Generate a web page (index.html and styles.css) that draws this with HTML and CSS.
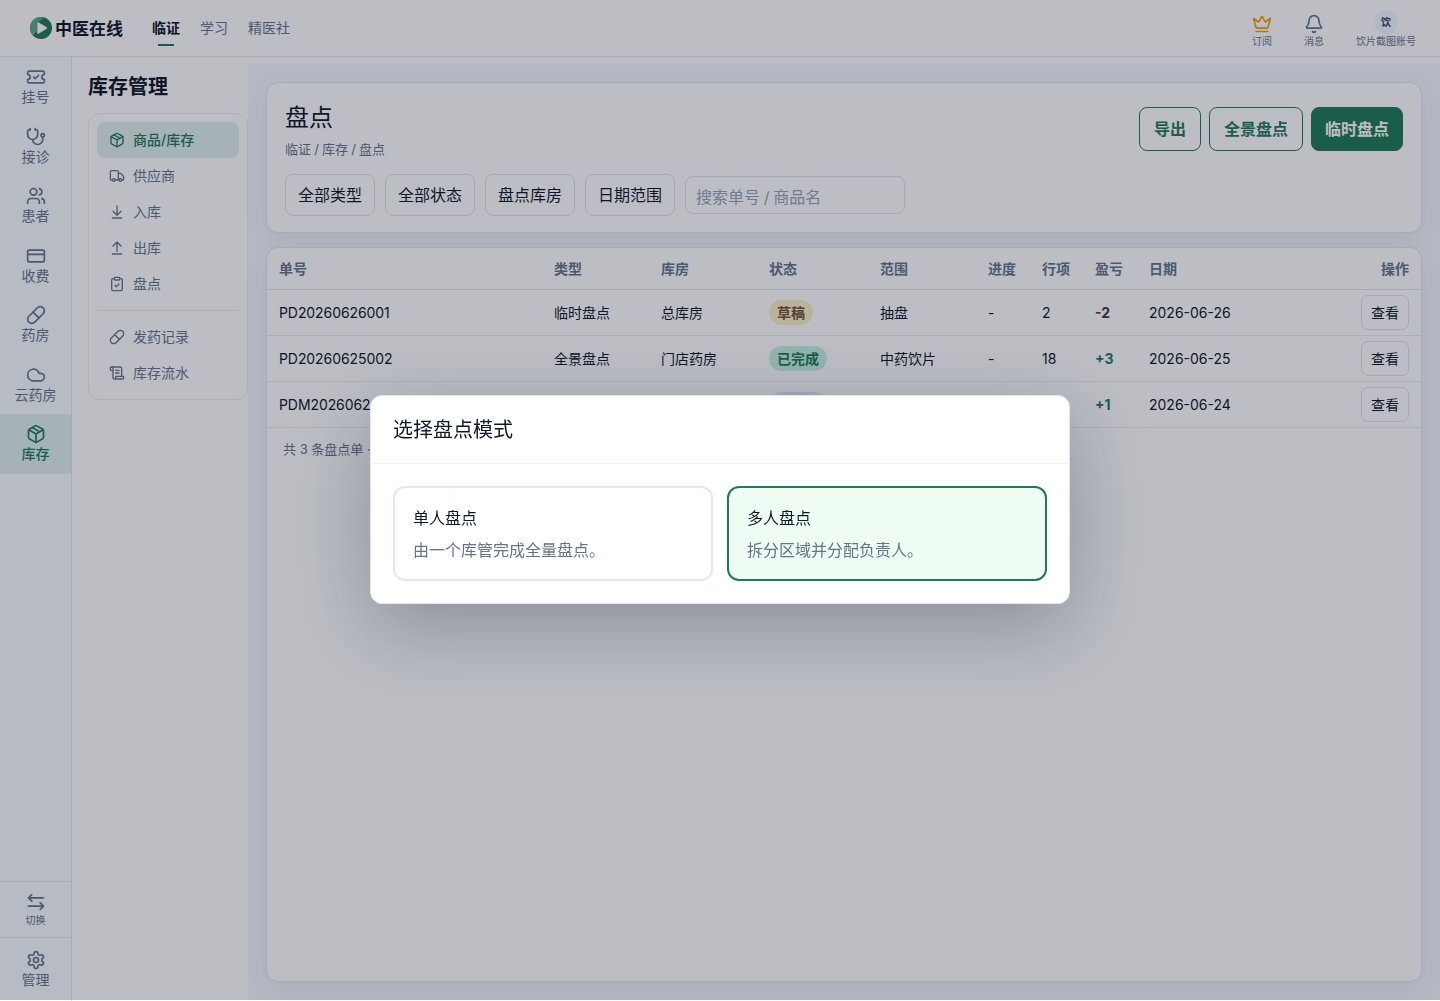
FILE: index.html
```html
<!DOCTYPE html>
<html lang="zh-CN">
<head>
    <meta charset="UTF-8">
    <meta name="viewport" content="width=device-width, initial-scale=1.0">
    <title>盘点 - 中医在线</title>
    <link rel="stylesheet" href="styles.css">
</head>
<body>
    <!-- 图标 -->
    <svg class="sprite" width="0" height="0">
        <symbol id="i-ticket" viewBox="0 0 24 24"><path d="M2 9a3 3 0 1 1 0 6v2a2 2 0 0 0 2 2h16a2 2 0 0 0 2-2v-2a3 3 0 1 1 0-6V7a2 2 0 0 0-2-2H4a2 2 0 0 0-2 2Z"/><path d="m9 12 2 2 4-4"/></symbol>
        <symbol id="i-steth" viewBox="0 0 24 24"><path d="M11 2v2M5 2v2M5 3H4a2 2 0 0 0-2 2v4a6 6 0 0 0 12 0V5a2 2 0 0 0-2-2h-1"/><path d="M8 15a6 6 0 0 0 12 0v-3"/><circle cx="20" cy="10" r="2"/></symbol>
        <symbol id="i-users" viewBox="0 0 24 24"><path d="M16 21v-2a4 4 0 0 0-4-4H6a4 4 0 0 0-4 4v2"/><circle cx="9" cy="7" r="4"/><path d="M22 21v-2a4 4 0 0 0-3-3.87M16 3.13a4 4 0 0 1 0 7.75"/></symbol>
        <symbol id="i-card" viewBox="0 0 24 24"><rect x="2" y="5" width="20" height="14" rx="2"/><path d="M2 10h20"/></symbol>
        <symbol id="i-pill" viewBox="0 0 24 24"><path d="m10.5 20.5 10-10a4.95 4.95 0 1 0-7-7l-10 10a4.95 4.95 0 1 0 7 7Z"/><path d="m8.5 8.5 7 7"/></symbol>
        <symbol id="i-cloud" viewBox="0 0 24 24"><path d="M17.5 19H9a7 7 0 1 1 6.71-9h1.79a4.5 4.5 0 1 1 0 9Z"/></symbol>
        <symbol id="i-box" viewBox="0 0 24 24"><path d="M11 21.73a2 2 0 0 0 2 0l7-4A2 2 0 0 0 21 16V8a2 2 0 0 0-1-1.73l-7-4a2 2 0 0 0-2 0l-7 4A2 2 0 0 0 3 8v8a2 2 0 0 0 1 1.73z"/><path d="M12 22V12M3.29 7 12 12l8.71-5M7.5 4.27l9 5.15"/></symbol>
        <symbol id="i-swap" viewBox="0 0 24 24"><path d="M7 3 3 7l4 4M3 7h18M17 13l4 4-4 4M21 17H3"/></symbol>
        <symbol id="i-gear" viewBox="0 0 24 24"><path d="M12.22 2h-.44a2 2 0 0 0-2 2v.18a2 2 0 0 1-1 1.73l-.43.25a2 2 0 0 1-2 0l-.15-.08a2 2 0 0 0-2.73.73l-.22.38a2 2 0 0 0 .73 2.73l.15.1a2 2 0 0 1 1 1.72v.51a2 2 0 0 1-1 1.74l-.15.09a2 2 0 0 0-.73 2.73l.22.38a2 2 0 0 0 2.73.73l.15-.08a2 2 0 0 1 2 0l.43.25a2 2 0 0 1 1 1.73V20a2 2 0 0 0 2 2h.44a2 2 0 0 0 2-2v-.18a2 2 0 0 1 1-1.73l.43-.25a2 2 0 0 1 2 0l.15.08a2 2 0 0 0 2.73-.73l.22-.39a2 2 0 0 0-.73-2.73l-.15-.08a2 2 0 0 1-1-1.74v-.5a2 2 0 0 1 1-1.74l.15-.09a2 2 0 0 0 .73-2.73l-.22-.38a2 2 0 0 0-2.73-.73l-.15.08a2 2 0 0 1-2 0l-.43-.25a2 2 0 0 1-1-1.73V4a2 2 0 0 0-2-2z"/><circle cx="12" cy="12" r="3"/></symbol>
        <symbol id="i-truck" viewBox="0 0 24 24"><path d="M14 18V6a2 2 0 0 0-2-2H4a2 2 0 0 0-2 2v11a1 1 0 0 0 1 1h2M15 18H9M19 18h2a1 1 0 0 0 1-1v-3.65a1 1 0 0 0-.22-.624l-3.48-4.35A1 1 0 0 0 17.52 8H14"/><circle cx="17" cy="18" r="2"/><circle cx="7" cy="18" r="2"/></symbol>
        <symbol id="i-in" viewBox="0 0 24 24"><path d="M12 17V3M6 11l6 6 6-6M19 21H5"/></symbol>
        <symbol id="i-out" viewBox="0 0 24 24"><path d="m18 9-6-6-6 6M12 3v14M5 21h14"/></symbol>
        <symbol id="i-clip" viewBox="0 0 24 24"><rect x="8" y="2" width="8" height="4" rx="1"/><path d="M16 4h2a2 2 0 0 1 2 2v14a2 2 0 0 1-2 2H6a2 2 0 0 1-2-2V6a2 2 0 0 1 2-2h2M9 14l2 2 4-4"/></symbol>
        <symbol id="i-scroll" viewBox="0 0 24 24"><path d="M15 12h-5M15 8h-5M19 17V5a2 2 0 0 0-2-2H4"/><path d="M8 21h12a2 2 0 0 0 2-2v-1a1 1 0 0 0-1-1H11a1 1 0 0 0-1 1v1a2 2 0 1 1-4 0V5a2 2 0 1 0-4 0v2a1 1 0 0 0 1 1h3"/></symbol>
        <symbol id="i-crown" viewBox="0 0 24 24"><path d="M11.562 3.266a.5.5 0 0 1 .876 0L15.39 8.87a1 1 0 0 0 1.516.294L21.183 5.5a.5.5 0 0 1 .798.519l-2.834 10.246a1 1 0 0 1-.956.734H5.81a1 1 0 0 1-.957-.734L2.02 6.02a.5.5 0 0 1 .798-.519l4.276 3.664a1 1 0 0 0 1.516-.294zM5 21h14"/></symbol>
        <symbol id="i-bell" viewBox="0 0 24 24"><path d="M10.268 21a2 2 0 0 0 3.464 0M3.262 15.326A1 1 0 0 0 4 17h16a1 1 0 0 0 .74-1.673C19.41 13.956 18 12.499 18 8A6 6 0 0 0 6 8c0 4.499-1.411 5.956-2.738 7.326"/></symbol>
    </svg>

    <header class="topbar">
        <div class="brand">
            <svg class="brand-logo" viewBox="0 0 22 22">
                <circle cx="11" cy="11" r="11" fill="#1f7a57"/>
                <path d="M11 0A11 11 0 0 0 3 18.5L7 14V6l7-5.5Q12.500 0 11 0Z" fill="#63a583"/>
                <path d="M7.300 5.800v10.400q0 1.100 1 .6l8.400-5q.9-.8 0-1.500l-8.400-5q-1-.5-1 .5Z" fill="#fff"/>
            </svg>
            <span>中医在线</span>
        </div>
        <nav class="topnav">
            <a class="active">临证</a>
            <a>学习</a>
            <a>精医社</a>
        </nav>
        <div class="top-actions">
            <div class="top-action"><svg class="icon crown"><use href="#i-crown"/></svg><span>订阅</span></div>
            <div class="top-action"><svg class="icon"><use href="#i-bell"/></svg><span>消息</span></div>
            <div class="top-action user"><b class="avatar">饮</b><span>饮片截图账号</span></div>
        </div>
    </header>

    <div class="layout">
        <aside class="rail">
            <a class="rail-item"><svg class="icon"><use href="#i-ticket"/></svg>挂号</a>
            <a class="rail-item"><svg class="icon"><use href="#i-steth"/></svg>接诊</a>
            <a class="rail-item"><svg class="icon"><use href="#i-users"/></svg>患者</a>
            <a class="rail-item"><svg class="icon"><use href="#i-card"/></svg>收费</a>
            <a class="rail-item"><svg class="icon"><use href="#i-pill"/></svg>药房</a>
            <a class="rail-item"><svg class="icon"><use href="#i-cloud"/></svg>云药房</a>
            <a class="rail-item active"><svg class="icon"><use href="#i-box"/></svg>库存</a>
            <div class="rail-bottom">
                <a class="rail-switch"><svg class="icon"><use href="#i-swap"/></svg>切换</a>
                <a class="rail-manage"><svg class="icon"><use href="#i-gear"/></svg>管理</a>
            </div>
        </aside>

        <aside class="side">
            <h2>库存管理</h2>
            <nav class="side-menu">
                <a class="active"><svg class="icon"><use href="#i-box"/></svg>商品/库存</a>
                <a><svg class="icon"><use href="#i-truck"/></svg>供应商</a>
                <a><svg class="icon"><use href="#i-in"/></svg>入库</a>
                <a><svg class="icon"><use href="#i-out"/></svg>出库</a>
                <a><svg class="icon"><use href="#i-clip"/></svg>盘点</a>
                <hr>
                <a><svg class="icon"><use href="#i-pill"/></svg>发药记录</a>
                <a><svg class="icon"><use href="#i-scroll"/></svg>库存流水</a>
            </nav>
        </aside>

        <main class="main">
            <section class="card head-card">
                <div class="head-row">
                    <div>
                        <h1>盘点</h1>
                        <div class="crumbs">临证 / 库存 / 盘点</div>
                    </div>
                    <div class="head-buttons">
                        <button class="btn">导出</button>
                        <button class="btn">全景盘点</button>
                        <button class="btn primary">临时盘点</button>
                    </div>
                </div>
                <div class="filters">
                    <button class="filter">全部类型</button>
                    <button class="filter">全部状态</button>
                    <button class="filter">盘点库房</button>
                    <button class="filter">日期范围</button>
                    <input class="search" type="text" placeholder="搜索单号 / 商品名">
                </div>
            </section>

            <section class="card list-card">
                <table>
                    <colgroup>
                        <col class="c-no"><col class="c-type"><col class="c-store"><col class="c-status"><col class="c-range">
                        <col class="c-progress"><col class="c-lines"><col class="c-diff"><col class="c-date"><col>
                    </colgroup>
                    <thead>
                        <tr><th>单号</th><th>类型</th><th>库房</th><th>状态</th><th>范围</th><th>进度</th><th>行项</th><th>盈亏</th><th>日期</th><th class="right">操作</th></tr>
                    </thead>
                    <tbody>
                        <tr><td>PD20260626001</td><td>临时盘点</td><td>总库房</td><td><span class="tag draft">草稿</span></td><td>抽盘</td><td>-</td><td>2</td><td class="loss">-2</td><td>2026-06-26</td><td class="right"><button class="view">查看</button></td></tr>
                        <tr><td>PD20260625002</td><td>全景盘点</td><td>门店药房</td><td><span class="tag done">已完成</span></td><td>中药饮片</td><td>-</td><td>18</td><td class="gain">+3</td><td>2026-06-25</td><td class="right"><button class="view">查看</button></td></tr>
                        <tr><td>PDM20260624</td><td></td><td></td><td><span class="tag muted">盘点中</span></td><td></td><td></td><td></td><td class="gain">+1</td><td>2026-06-24</td><td class="right"><button class="view">查看</button></td></tr>
                    </tbody>
                </table>
                <div class="summary">共 3 条盘点单 ·</div>
            </section>
        </main>
    </div>

    <div class="overlay">
        <div class="modal">
            <div class="modal-title">选择盘点模式</div>
            <div class="modal-body">
                <div class="mode">
                    <div class="mode-name">单人盘点</div>
                    <div class="mode-desc">由一个库管完成全量盘点。</div>
                </div>
                <div class="mode selected">
                    <div class="mode-name">多人盘点</div>
                    <div class="mode-desc">拆分区域并分配负责人。</div>
                </div>
            </div>
        </div>
    </div>
</body>
</html>
```

FILE: styles.css
```css
* {
    box-sizing: border-box;
}
body {
    margin: 0;
    background: #fff;
    color: #0f172a;
    font-family: Inter, "Noto Sans CJK SC", sans-serif;
    font-size: 14px;
    overflow: hidden;
}
button, input {
    font-family: inherit;
    color: inherit;
    background: none;
}
.sprite {
    position: absolute;
}
.icon {
    display: block;
    width: 20px;
    height: 20px;
    fill: none;
    stroke: currentColor;
    stroke-width: 2;
    stroke-linecap: round;
    stroke-linejoin: round;
}

/* 顶栏 */
.topbar {
    display: flex;
    align-items: center;
    height: 57px;
    padding: 0 24px 0 30px;
    border-bottom: 1px solid #e2e6ea;
}
.brand {
    display: flex;
    align-items: center;
    gap: 3px;
    width: 122px;
    font-size: 17px;
    line-height: 24px;
    font-weight: 600;
    white-space: nowrap;
}
.brand span {
    padding-top: 1px;
}
.brand-logo {
    width: 22px;
    height: 22px;
}
.topnav {
    display: flex;
    gap: 20px;
    height: 36px;
    color: #64748b;
    line-height: 36px;
}
.topnav .active {
    color: #0f172a;
    font-weight: 600;
    background: linear-gradient(#1f7a57, #1f7a57) center bottom / 16px 2px no-repeat;
}
.top-actions {
    display: flex;
    gap: 32px;
    margin-left: auto;
    padding-top: 2px;
    color: #64748b;
}
.top-action {
    display: flex;
    flex-direction: column;
    align-items: center;
    padding-top: 4px;
    font-size: 10px;
    line-height: 14px;
}
.top-action.user {
    padding-top: 0;
}
.crown {
    color: #f59e0b;
}
.avatar {
    width: 24px;
    height: 24px;
    border-radius: 50%;
    background: #f1f5ff;
    color: #334155;
    line-height: 24px;
    text-align: center;
}

/* 左侧导航 */
.layout {
    display: flex;
    height: 944px;
}
.rail {
    display: flex;
    flex-direction: column;
    width: 72px;
    background: linear-gradient(#f8fbff, #f8fbff) 0 0 / 100% 943px no-repeat;
    border-right: 1px solid #dfe3e8;
    color: #64748b;
}
.rail-item, .rail-switch, .rail-manage {
    display: flex;
    flex-direction: column;
    align-items: center;
    line-height: 20px;
}
.rail-item {
    height: 59.5px;
    padding-top: 10px;
}
.rail-item.active {
    height: 60px;
    background: #e0f0ed;
    color: #1f7a57;
    font-weight: 500;
}
.rail-bottom {
    margin-top: auto;
}
.rail-switch {
    height: 56px;
    padding-top: 10px;
    border-top: 1px solid #dfe3e8;
    font-size: 10px;
    line-height: 17px;
}
.rail-manage {
    height: 64px;
    padding-top: 12px;
    border-top: 1px solid #dfe3e8;
}

/* 库存菜单 */
.side {
    width: 176px;
    padding: 15px 0 0 16px;
}
.side h2 {
    margin: 0 0 11px;
    font-size: 20px;
    line-height: 30px;
    font-weight: 600;
}
.side-menu {
    padding: 8px;
    border: 1px solid #e9edf2;
    border-radius: 12px;
}
.side-menu a {
    display: flex;
    align-items: center;
    gap: 8px;
    height: 36px;
    padding-left: 12px;
    border-radius: 8px;
    color: #64748b;
    line-height: 20px;
}
.side-menu .active {
    background: #e0f0ed;
    color: #1f7a57;
    font-weight: 500;
}
.side-menu .icon {
    width: 16px;
    height: 16px;
}
.side-menu hr {
    height: 1px;
    margin: 8px 0;
    border: 0;
    background: #e5e9ee;
}

/* 内容区 */
.main {
    display: flex;
    flex-direction: column;
    gap: 14px;
    flex: 1;
    height: 936px;
    margin-top: 7px;
    padding: 18px;
    background: #f5f8ff;
}
.card {
    border: 1px solid #dfe5f0;
    border-radius: 12px;
    background: #fff;
    box-shadow: 0 8px 24px rgba(30, 50, 90, 0.07);
}
.head-card {
    height: 151px;
    padding: 18px;
}
.head-row {
    display: flex;
    justify-content: space-between;
}
.head-row h1 {
    margin: 0;
    font-size: 24px;
    line-height: 34px;
    font-weight: 400;
}
.crumbs {
    margin-top: 4px;
    color: #64748b;
    font-size: 13px;
    line-height: 20px;
    word-spacing: -0.5px;
}
.head-buttons {
    display: flex;
    gap: 8px;
    padding-top: 6px;
}
.btn {
    height: 44px;
    padding: 0 14px 2px;
    border: 1px solid #1f7a57;
    border-radius: 8px;
    color: #1f7a57;
    font-size: 16px;
    font-weight: 600;
}
.btn.primary {
    padding: 0 13px 2px;
    background: #1f7a57;
    color: #fff;
}
.filters {
    display: flex;
    align-items: center;
    gap: 10px;
    margin-top: 15px;
}
.filter {
    width: 90px;
    height: 42px;
    padding: 0 0 2px;
    border: 1px solid #dbe2ec;
    border-radius: 8px;
    font-size: 16px;
}
.search {
    width: 220px;
    height: 38px;
    padding: 3px 10px 0;
    border: 1px solid #dbe2ec;
    border-radius: 8px;
    font-size: 16px;
    word-spacing: -0.8px;
}
.search::placeholder {
    color: #94a3b8;
}
.list-card {
    flex: 1;
}
table {
    width: 100%;
    table-layout: fixed;
    border-collapse: collapse;
}
.c-no { width: 275px; }
.c-type { width: 107px; }
.c-store { width: 108px; }
.c-status { width: 111px; }
.c-range { width: 108px; }
.c-progress { width: 54px; }
.c-lines { width: 53px; }
.c-diff { width: 54px; }
.c-date { width: 140px; }
th, td {
    padding: 0 12px;
    border-bottom: 1px solid #e8edf2;
    text-align: left;
    white-space: nowrap;
}
th {
    height: 41px;
    border-color: #dfe4ea;
    color: #64748b;
    font-weight: 600;
}
td {
    height: 46px;
}
td:first-child {
    letter-spacing: -0.08px;
}
.right {
    text-align: right;
}
.tag {
    display: inline-block;
    padding: 0 8px;
    border-radius: 13px;
    line-height: 25px;
    font-weight: 600;
    vertical-align: middle;
}
.draft {
    background: #fdf0c8;
    color: #78503c;
}
.done {
    background: #c7f3e0;
    color: #1f7a57;
}
.muted {
    background: #e2e8f0;
    color: #475569;
}
.loss {
    color: #4f3a35;
    font-weight: 700;
}
.gain {
    color: #1f7a57;
    font-weight: 700;
}
.view {
    width: 48px;
    height: 35px;
    padding: 0;
    border: 1px solid #dbe2ec;
    border-radius: 7px;
    font-size: 14px;
    vertical-align: middle;
}
.summary {
    padding: 11px 16px;
    color: #64748b;
    font-size: 13px;
    line-height: 20px;
}

/* 选择模式弹窗 */
.overlay {
    position: fixed;
    top: 0;
    left: 0;
    display: flex;
    align-items: center;
    justify-content: center;
    width: 100%;
    height: 1000px;
    background: rgba(15, 23, 42, 0.28);
}
.modal {
    width: 700px;
    height: 209px;
    margin-bottom: 1px;
    border: 1px solid #dfe5ee;
    border-radius: 12px;
    background: #fff;
    box-shadow: 0 24px 80px rgba(15, 23, 42, 0.28);
}
.modal-title {
    height: 68px;
    padding: 1px 22px 0;
    border-bottom: 1px solid #eef1f4;
    font-size: 20px;
    line-height: 67px;
}
.modal-body {
    display: grid;
    grid-template-columns: 1fr 1fr;
    gap: 14px;
    padding: 22px;
}
.mode {
    height: 95px;
    padding: 18px;
    border: 2px solid #e2e8f0;
    border-radius: 12px;
    font-size: 16px;
    line-height: 24px;
}
.mode.selected {
    border-color: #1f7a57;
    background: #effcf4;
}
.mode-desc {
    margin-top: 8px;
    color: #64748b;
}
```
